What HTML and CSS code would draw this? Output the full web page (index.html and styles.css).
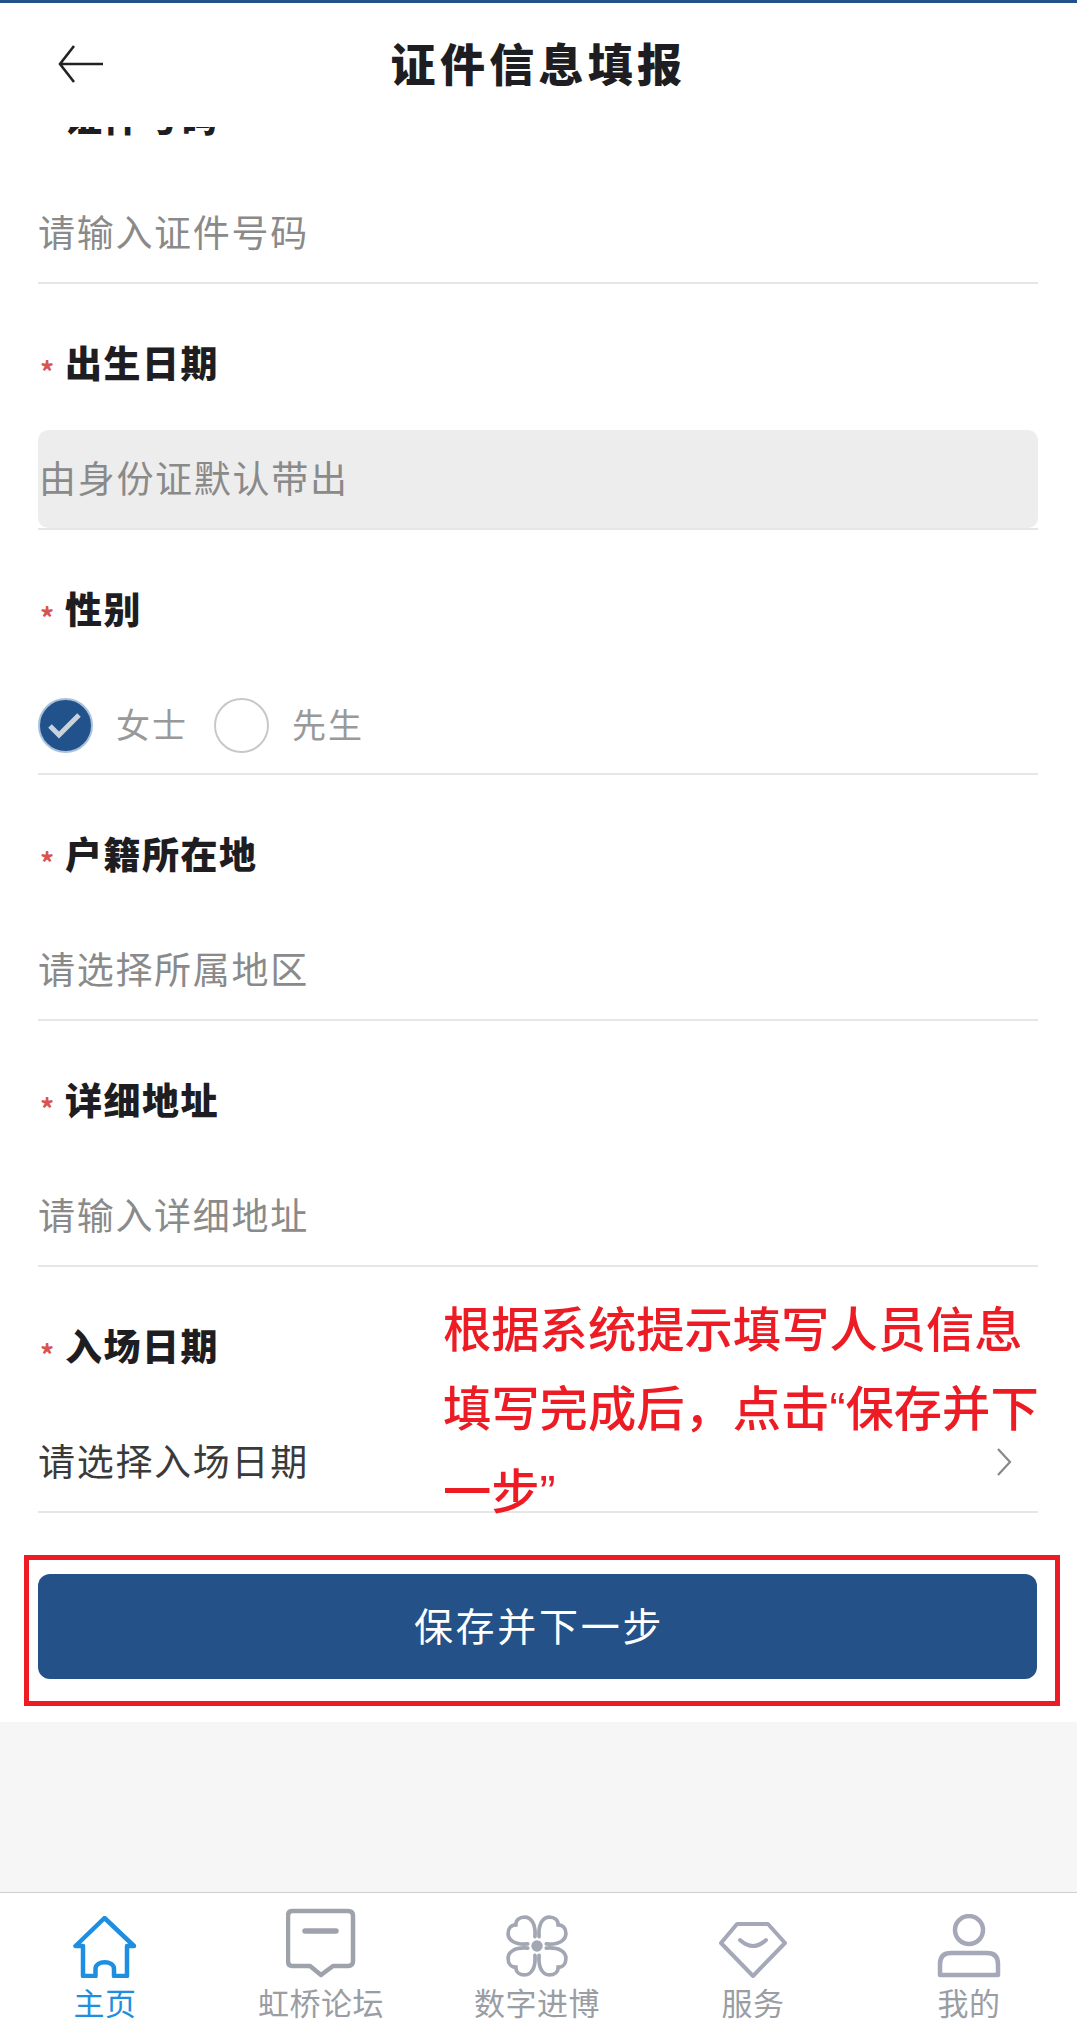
FILE: index.html
```html
<!DOCTYPE html>
<html lang="zh-CN">
<head>
    <meta charset="UTF-8">
    <meta name="viewport" content="width=device-width, initial-scale=1.0">
    <title>证件信息填报</title>
    <link rel="stylesheet" href="styles.css">
</head>
<body>
    <div class="page">
        <div class="header">
            <svg class="back" width="48" height="40" viewBox="0 0 48 40" fill="none" stroke="#222" stroke-width="2.6">
                <path d="M46 20H3M17 2 3 20l14 18"/>
            </svg>
            <h1>证件信息填报</h1>
        </div>

        <div class="form">
            <div class="row row-first">
                <div class="label"><span class="star">*</span>证件号码</div>
                <div class="value">请输入证件号码</div>
            </div>
            <div class="row">
                <div class="label"><span class="star">*</span>出生日期</div>
                <div class="value value-disabled">由身份证默认带出</div>
            </div>
            <div class="row row-short">
                <div class="label"><span class="star">*</span>性别</div>
                <div class="value radios">
                    <span class="radio radio-on">
                        <svg width="54" height="54" viewBox="0 0 54 54" fill="none">
                            <path d="M12 28l9 9 20-20" stroke="#c9d3de" stroke-width="5"/>
                        </svg>
                    </span>
                    <span class="radio-text">女士</span>
                    <span class="radio"></span>
                    <span class="radio-text">先生</span>
                </div>
            </div>
            <div class="row">
                <div class="label"><span class="star">*</span>户籍所在地</div>
                <div class="value">请选择所属地区</div>
            </div>
            <div class="row">
                <div class="label"><span class="star">*</span>详细地址</div>
                <div class="value">请输入详细地址</div>
            </div>
            <div class="row">
                <div class="label"><span class="star">*</span>入场日期</div>
                <div class="value value-filled">
                    请选择入场日期
                    <svg class="chevron" width="16" height="28" viewBox="0 0 16 28" fill="none" stroke="#888" stroke-width="2.2">
                        <path d="M2 1l12 13L2 27"/>
                    </svg>
                </div>
            </div>
        </div>

        <div class="actions">
            <button class="save" type="button">保存并下一步</button>
            <div class="mark"></div>
        </div>

        <div class="filler"></div>

        <div class="tabbar">
            <div class="tab tab-active">
                <svg width="64" height="62" viewBox="0 0 64 62" fill="none" stroke="#1e8fe0" stroke-width="4.5" stroke-linejoin="round">
                    <path d="M31.5 2 2.5 30H10V60H22.5V53C22.5 44 41 44 41 53V60H54V30H61Z"/>
                </svg>
                <span>主页</span>
            </div>
            <div class="tab">
                <svg width="70" height="70" viewBox="0 0 70 70" fill="none" stroke="#9ea3ab" stroke-width="4.5" stroke-linejoin="round" stroke-linecap="round">
                    <path d="M6 3H62Q67 3 67 8V53Q67 58 62 58H47L35 67 24 58H6Q2 58 2 53V8Q2 3 6 3Z"/>
                    <path d="M19 23H50" stroke-width="5.5"/>
                </svg>
                <span>虹桥论坛</span>
            </div>
            <div class="tab">
                <svg width="64" height="64" viewBox="0 0 62 62" fill="none" stroke="#a3a7b3" stroke-width="3.6" stroke-linecap="round">
                    <path d="M29 22C30 9 25 3 19 3 14 3 10.500 6 10.500 10.500 6 10.500 3 14 3 19 3 25 9 30 22 29"/>
                    <path transform="rotate(90 31 31)" d="M29 22C30 9 25 3 19 3 14 3 10.500 6 10.500 10.500 6 10.500 3 14 3 19 3 25 9 30 22 29"/>
                    <path transform="rotate(180 31 31)" d="M29 22C30 9 25 3 19 3 14 3 10.500 6 10.500 10.500 6 10.500 3 14 3 19 3 25 9 30 22 29"/>
                    <path transform="rotate(270 31 31)" d="M29 22C30 9 25 3 19 3 14 3 10.500 6 10.500 10.500 6 10.500 3 14 3 19 3 25 9 30 22 29"/>
                    <circle cx="31" cy="31" r="5.500" fill="#a3a7b3" stroke="none"/>
                </svg>
                <span>数字进博</span>
            </div>
            <div class="tab">
                <svg width="68" height="56" viewBox="0 0 68 56" fill="none" stroke="#a5a8b8" stroke-width="4" stroke-linejoin="round" stroke-linecap="round">
                    <path d="M18 2H49L66 21 34 54 2 21Z"/>
                    <path d="M21 18Q34 30 47 18"/>
                </svg>
                <span>服务</span>
            </div>
            <div class="tab">
                <svg width="64" height="64" viewBox="0 0 64 64" fill="none" stroke="#a5a8b8" stroke-width="4.500" stroke-linejoin="round">
                    <circle cx="32" cy="16" r="14"/>
                    <path d="M14 39H50Q61 39 61 50V61H3V50Q3 39 14 39Z"/>
                </svg>
                <span>我的</span>
            </div>
        </div>

        <div class="note">根据系统提示填写人员信息<br>填写完成后，点击<span class="quote">“</span>保存并下<br>一步<span class="quote">”</span></div>
    </div>
</body>
</html>
```

FILE: styles.css
```css
* {
    box-sizing: border-box;
}
body {
    margin: 0;
    font-family: "Noto Sans CJK SC", "Liberation Sans", sans-serif;
    background-color: #fff;
}
.page {
    position: relative;
    display: flex;
    flex-direction: column;
    width: 1077px;
    height: 2043px;
    overflow: hidden;
    border-top: 3px solid #24518a;
}

/* 顶部标题 */
.header {
    position: relative;
    display: flex;
    flex: none;
    align-items: center;
    justify-content: center;
    height: 124px;
}
.header h1 {
    margin: 0 0 6px;
    font-size: 45px;
    font-weight: 900;
    letter-spacing: 4.300px;
    color: #1d1d22;
    line-height: 1;
}
.back {
    position: absolute;
    left: 57px;
    top: 41px;
}

/* 表单 */
.form {
    flex: none;
    overflow: hidden;
    padding: 0 39px 0 38px;
}
.row {
    display: flex;
    flex-direction: column;
    height: 246px;
    border-bottom: 2px solid #e6e6e6;
}
.row-first {
    margin-top: -89px;
}
.row-short {
    height: 245px;
}
.label {
    display: flex;
    align-items: center;
    flex: none;
    height: 146px;
    padding-top: 10px;
    font-size: 37px;
    font-weight: 900;
    letter-spacing: 1.500px;
    color: #1d1d22;
}
.star {
    width: 27px;
    padding: 18px 0 0 2px;
    font-size: 28px;
    font-weight: 700;
    letter-spacing: 0;
    color: #d9534f;
}
.value {
    display: flex;
    flex: 1;
    align-items: center;
    padding-bottom: 5px;
    font-size: 37px;
    letter-spacing: 1.700px;
    color: #8a8a8a;
}
.value-disabled {
    padding-left: 1px;
    background-color: #ededed;
    border-radius: 10px;
}
.value-filled {
    justify-content: space-between;
    padding-right: 26px;
    color: #3a3a3a;
}
.chevron {
    margin-top: 4px;
}
.radios {
    padding-bottom: 0;
    padding-top: 2px;
    font-size: 34px;
    letter-spacing: 2px;
    color: #999;
}
.radio {
    display: block;
    width: 55px;
    height: 55px;
    border: 2px solid #c8c8c8;
    border-radius: 50%;
}
.radio-on {
    background-color: #22528c;
    border-color: #a9c2da;
}
.radio-on svg {
    display: block;
    margin: -2px;
}
.radio-text {
    margin: 0 26px 5px 23px;
}

/* 保存按钮 */
.actions {
    position: relative;
    flex: none;
    height: 209px;
    padding: 61px 40px 0 38px;
}
.save {
    display: block;
    width: 100%;
    height: 105px;
    padding: 0 0 6px 3px;
    border: none;
    border-radius: 12px;
    background-color: #245288;
    font-family: inherit;
    font-size: 39px;
    letter-spacing: 2.700px;
    color: #fff;
}
.mark {
    position: absolute;
    left: 24px;
    top: 42px;
    width: 1036px;
    height: 151px;
    border: 5px solid #ed1c24;
}
.note {
    position: absolute;
    left: 443px;
    top: 1284px;
    font-size: 48.300px;
    font-weight: 500;
    line-height: 79px;
    color: #ed1c24;
    white-space: nowrap;
}
.quote {
    font-family: "Liberation Sans", sans-serif;
}

.filler {
    flex: 1;
    background-color: #f6f6f6;
}

/* 底部导航 */
.tabbar {
    display: flex;
    flex: none;
    width: 1080px;
    height: 151px;
    margin-left: -3px;
    background-color: #fff;
    border-top: 1px solid #cfcfcf;
}
.tab {
    display: flex;
    flex: 1;
    flex-direction: column;
    align-items: center;
    justify-content: flex-end;
    padding-bottom: 19px;
    font-size: 31px;
    letter-spacing: 0.500px;
    line-height: 44px;
    color: #9a9da3;
}
.tab svg {
    display: block;
    margin-bottom: 2px;
}
.tab-active {
    color: #1e8fe0;
}
```
